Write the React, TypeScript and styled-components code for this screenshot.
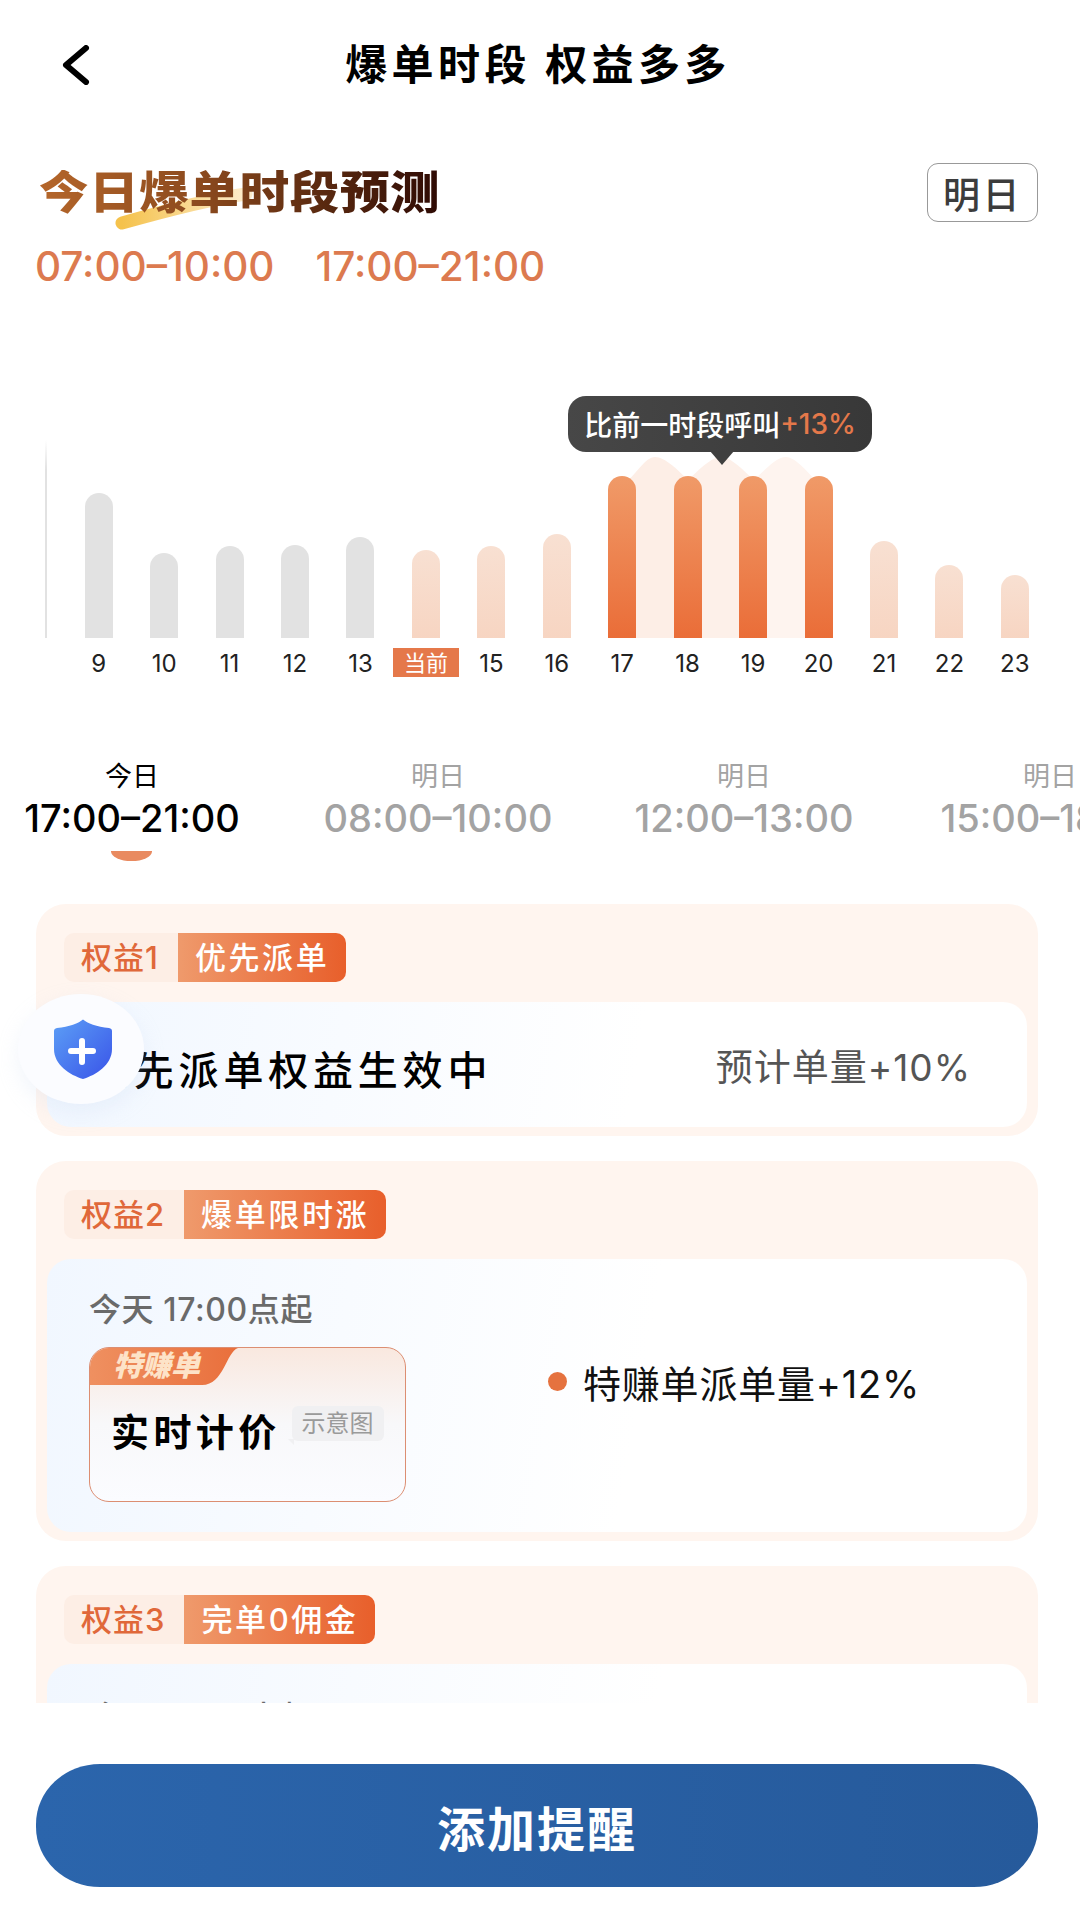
import React from "react";
import styled, { createGlobalStyle } from "styled-components";

const SANS = `Inter, "Noto Sans CJK SC", sans-serif`;

const GlobalStyle = createGlobalStyle`
	html,
	body {
		margin: 0;
		padding: 0;
		background: #fff;
		font-family: ${SANS};
	}
`;

const BARS = [
	{ label: "9", height: 145, kind: "past" },
	{ label: "10", height: 85, kind: "past" },
	{ label: "11", height: 92, kind: "past" },
	{ label: "12", height: 93, kind: "past" },
	{ label: "13", height: 101, kind: "past" },
	{ label: "当前", height: 88, kind: "soft" },
	{ label: "15", height: 92, kind: "soft" },
	{ label: "16", height: 104, kind: "soft" },
	{ label: "17", height: 162, kind: "hot" },
	{ label: "18", height: 162, kind: "hot" },
	{ label: "19", height: 162, kind: "hot" },
	{ label: "20", height: 162, kind: "hot" },
	{ label: "21", height: 97, kind: "soft" },
	{ label: "22", height: 73, kind: "soft" },
	{ label: "23", height: 63, kind: "soft" },
];

const SLOTS = [
	{ day: "今日", time: "17:00–21:00", active: true },
	{ day: "明日", time: "08:00–10:00", active: false },
	{ day: "明日", time: "12:00–13:00", active: false },
	{ day: "明日", time: "15:00–18:00", active: false },
];

function BackIcon() {
	return (
		<svg width="30" height="40" viewBox="0 0 30 40" fill="none">
			<path
				d="M25 3 L5 20 L25 37"
				stroke="#000"
				strokeWidth="6"
				strokeLinecap="round"
				strokeLinejoin="round"
			/>
		</svg>
	);
}

function ShieldIcon() {
	return (
		<svg width="58" height="60" viewBox="0 0 58 60">
			<defs>
				<linearGradient id="shield" x1="0" y1="0" x2="1" y2="1">
					<stop offset="0" stopColor="#5c9ff6" />
					<stop offset="1" stopColor="#3953e8" />
				</linearGradient>
			</defs>
			<path
				d="M29 0.5 C33 4 43 8 55 9 Q58 9.5 58 12 V30 C58 46 42 56 29 60 C16 56 0 46 0 30 V12 Q0 9.5 3 9 C15 8 25 4 29 0.5Z"
				fill="url(#shield)"
			/>
			<path
				d="M17 32 H39 M28 22 V43"
				stroke="#fff"
				strokeWidth="6"
				strokeLinecap="round"
			/>
		</svg>
	);
}

export default function App() {
	return (
		<Page>
			<GlobalStyle />
			<Header>
				<BackButton>
					<BackIcon />
				</BackButton>
				<Title>爆单时段 权益多多</Title>
			</Header>

			<Forecast>
				<ForecastRow>
					<Heading>
						<Swoosh width="140" height="48" viewBox="0 0 140 48" fill="none">
							<defs>
								<linearGradient id="swoosh" x1="0" y1="0" x2="1" y2="0">
									<stop offset="0" stopColor="#f5c24c" />
									<stop offset="1" stopColor="#fdeccb" />
								</linearGradient>
							</defs>
							<path
								d="M8 37 C40 28 90 14 132 8"
								stroke="url(#swoosh)"
								strokeWidth="13"
								strokeLinecap="round"
							/>
						</Swoosh>
						<HeadingText>今日爆单时段预测</HeadingText>
					</Heading>
					<DayButton>明日</DayButton>
				</ForecastRow>
				<Peaks>
					<span>07:00–10:00</span>
					<span>17:00–21:00</span>
				</Peaks>
			</Forecast>

			<Chart>
				<Humps width="1080" height="242" viewBox="0 0 1080 242">
					<path
						d="M622 242 V90 C637 78 645 61 655 61 C665 61 678 74 688 84 V242 Z"
						fill="#fdeee6"
					/>
					<path
						d="M688 242 V84 C699 74 711 61 721 61 C731 61 743 74 754 84 V242 Z"
						fill="#fdf0e9"
					/>
					<path
						d="M754 242 V84 C765 74 776 61 786 61 C796 61 809 78 819 88 V242 Z"
						fill="#fef4ef"
					/>
				</Humps>
				<Tooltip>
					比前一时段呼叫<em>+13%</em>
				</Tooltip>
				<Plot>
					<Axis />
					<Bars>
						{BARS.map((bar) => (
							<BarSlot key={bar.label}>
								<Bar $kind={bar.kind} style={{ height: bar.height }} />
							</BarSlot>
						))}
					</Bars>
				</Plot>
				<Labels>
					{BARS.map((bar) => (
						<BarLabel key={bar.label} $current={bar.label === "当前"}>
							{bar.label}
						</BarLabel>
					))}
				</Labels>
			</Chart>

			<Tabs>
				{SLOTS.map((slot) => (
					<Tab key={slot.time} $active={slot.active}>
						<TabDay>{slot.day}</TabDay>
						<TabTime>{slot.time}</TabTime>
						{slot.active && <TabMark />}
					</Tab>
				))}
			</Tabs>

			<Benefits>
				<Card>
					<Tag>
						<TagIndex>权益1</TagIndex>
						<TagName>优先派单</TagName>
					</Tag>
					<StatusPanel>
						<StatusText>优先派单权益生效中</StatusText>
						<StatusNote>预计单量+10%</StatusNote>
						<ShieldBadge>
							<ShieldIcon />
						</ShieldBadge>
					</StatusPanel>
				</Card>

				<Card>
					<Tag>
						<TagIndex>权益2</TagIndex>
						<TagName>爆单限时涨</TagName>
					</Tag>
					<DetailPanel>
						<DetailLeft>
							<StartTime>今天 17:00点起</StartTime>
							<MiniCard>
								<MiniBadge>特赚单</MiniBadge>
								<MiniBody>
									<MiniTitle>实时计价</MiniTitle>
									<Bubble>示意图</Bubble>
								</MiniBody>
							</MiniCard>
						</DetailLeft>
						<Bullet>
							<Dot />
							特赚单派单量+12%
						</Bullet>
					</DetailPanel>
				</Card>

				<Card>
					<Tag>
						<TagIndex>权益3</TagIndex>
						<TagName>完单0佣金</TagName>
					</Tag>
					<DetailPanel>
						<DetailLeft $top={35}>
							<StartTime>今天 17:00点起</StartTime>
						</DetailLeft>
					</DetailPanel>
				</Card>
			</Benefits>

			<Footer>
				<RemindButton>添加提醒</RemindButton>
			</Footer>
		</Page>
	);
}

const Page = styled.div`
	width: 1080px;
	height: 1920px;
	overflow: hidden;
	display: flex;
	flex-direction: column;
	background: #fff;
`;

const Header = styled.header`
	position: relative;
	height: 130px;
	flex: none;
	display: flex;
	align-items: center;
	justify-content: center;
`;

const BackButton = styled.div`
	position: absolute;
	left: 61px;
	top: 45px;
	line-height: 0;
`;

const Title = styled.h1`
	margin: 0 0 0 -4px;
	font-size: 42px;
	font-weight: 700;
	letter-spacing: 4.4px;
	line-height: 1;
	color: #000;
`;

const Forecast = styled.section`
	flex: none;
	height: 266px;
	padding: 33px 42px 0 36px;
	box-sizing: border-box;
`;

const ForecastRow = styled.div`
	display: flex;
	justify-content: space-between;
	align-items: center;
	height: 59px;
`;

const Heading = styled.div`
	position: relative;
	margin-left: 3px;
`;

const Swoosh = styled.svg`
	position: absolute;
	left: 75px;
	top: 16px;
`;

const HeadingText = styled.h2`
	position: relative;
	margin: 0;
	font-size: 45px;
	font-weight: 900;
	line-height: 1;
	letter-spacing: 0.6px;
	white-space: nowrap;
	color: transparent;
	background: linear-gradient(90deg, #b5662a 0%, #8c4a1e 40%, #5b2a10 70%, #2e0a04 100%);
	background-clip: text;
	-webkit-background-clip: text;
	transform: scaleX(1.1);
	transform-origin: left center;
`;

const DayButton = styled.div`
	width: 111px;
	height: 59px;
	box-sizing: border-box;
	border: 1.5px solid #999;
	border-radius: 11px;
	display: flex;
	align-items: center;
	justify-content: center;
	font-size: 37px;
	font-weight: 500;
	letter-spacing: 2.5px;
	color: #3c3c3c;
`;

const Peaks = styled.div`
	display: flex;
	gap: 41px;
	margin-top: 22px;
	margin-left: -1px;
	font-size: 40.5px;
	font-weight: 500;
	line-height: 46px;
	color: #dc7a4f;
`;

const Chart = styled.section`
	position: relative;
	flex: none;
	height: 364px;
`;

const Humps = styled.svg`
	position: absolute;
	left: 0;
	top: 0;
`;

const Tooltip = styled.div`
	position: absolute;
	left: 568px;
	top: 0;
	width: 304px;
	height: 56px;
	box-sizing: border-box;
	border-radius: 18px;
	background: linear-gradient(90deg, #474747, #383838);
	color: #fff;
	display: flex;
	align-items: center;
	justify-content: center;
	font-size: 28px;
	font-weight: 500;
	white-space: nowrap;
	z-index: 2;

	em {
		font-style: normal;
		color: #e4784a;
	}

	&::after {
		content: "";
		position: absolute;
		left: 142px;
		bottom: -13px;
		border-left: 12px solid transparent;
		border-right: 12px solid transparent;
		border-top: 14px solid #3f3f3f;
	}
`;

const Plot = styled.div`
	position: relative;
	display: flex;
	align-items: flex-end;
	height: 198px;
	padding: 44px 0 0 45px;
`;

const Axis = styled.div`
	width: 2px;
	height: 100%;
	background: linear-gradient(180deg, #fff, #e2e2e2 15%);
`;

const Bars = styled.div`
	display: flex;
	align-items: flex-end;
	margin-left: 19px;
`;

const BarSlot = styled.div`
	width: 65.45px;
	display: flex;
	justify-content: center;
`;

const BAR_FILL: Record<string, string> = {
	past: "#e2e2e2",
	soft: "linear-gradient(180deg, #f8e0d2, #f7d5c2)",
	hot: "linear-gradient(180deg, #f09a68, #ea6d38)",
};

const Bar = styled.div<{ $kind: string }>`
	width: 28px;
	border-radius: 14px 14px 0 0;
	background: ${(p) => BAR_FILL[p.$kind]};
`;

const Labels = styled.div`
	display: flex;
	padding-left: 66px;
	margin-top: 10px;
`;

const BarLabel = styled.div<{ $current: boolean }>`
	flex: none;
	box-sizing: border-box;
	width: 65.45px;
	height: 29px;
	line-height: 31px;
	text-align: center;
	font-size: ${(p) => (p.$current ? "22px" : "24px")};
	color: ${(p) => (p.$current ? "#fff" : "#222")};
	background: ${(p) => (p.$current ? "#e5784a" : "transparent")};
`;

const Tabs = styled.section`
	flex: none;
	height: 144px;
	display: flex;
	padding-left: 18px;
	overflow: hidden;
`;

const Tab = styled.div<{ $active: boolean }>`
	position: relative;
	flex: none;
	width: 306px;
	box-sizing: border-box;
	padding-right: 78px;
	text-align: center;
	color: ${(p) => (p.$active ? "#000" : "#a3a3a3")};
`;

const TabDay = styled.div`
	font-size: 27px;
	line-height: 34px;
`;

const TabTime = styled.div`
	margin-top: 4px;
	margin-left: -10px;
	margin-right: -10px;
	font-size: 38px;
	font-weight: 500;
	line-height: 40px;
	white-space: nowrap;
`;

const TabMark = styled.div`
	position: absolute;
	left: 93px;
	top: 91px;
	width: 41px;
	height: 10px;
	border-radius: 0 0 21px 21px / 0 0 10px 10px;
	background: #e98a60;
`;

const Benefits = styled.section`
	flex: 1;
	min-height: 0;
	overflow: hidden;
	display: flex;
	flex-direction: column;
	gap: 25px;
	padding: 0 42px 0 36px;
`;

const Card = styled.article`
	flex: none;
	border-radius: 30px;
	background: #fff5ef;
	padding: 29px 11px 9px;
`;

const Tag = styled.div`
	display: flex;
	height: 49px;
	margin-left: 17px;
`;

const TagIndex = styled.div`
	padding: 0 19px 4px 17px;
	display: flex;
	align-items: center;
	border-radius: 10px 0 0 10px;
	background: #fdeee5;
	color: #e0683a;
	font-size: 31px;
	font-weight: 500;
	letter-spacing: 1px;
`;

const TagName = styled.div`
	padding: 0 17px 4px 17px;
	display: flex;
	align-items: center;
	border-radius: 0 10px 10px 0;
	background: linear-gradient(90deg, #ef9a6c, #e85f2b);
	color: #fff;
	font-size: 31px;
	font-weight: 500;
	letter-spacing: 2.6px;
`;

const StatusPanel = styled.div`
	position: relative;
	margin-top: 20px;
	height: 125px;
	border-radius: 24px;
	background: linear-gradient(100deg, #f1f7ff, #fff 60%);
	display: flex;
	align-items: center;
	justify-content: space-between;
	padding: 0 56px 0 42px;
`;

const StatusText = styled.div`
	font-size: 40px;
	font-weight: 500;
	letter-spacing: 4.8px;
	margin-top: 6px;
	color: #000;
`;

const StatusNote = styled.div`
	font-size: 37px;
	letter-spacing: 1px;
	color: #555;
`;

const ShieldBadge = styled.div`
	position: absolute;
	left: -29px;
	top: -8px;
	width: 126px;
	height: 110px;
	border-radius: 50%;
	background: #fbfcff;
	box-shadow: 0 8px 20px rgba(200, 215, 240, 0.25);
	display: flex;
	align-items: center;
	justify-content: center;
	padding-left: 3px;
	box-sizing: border-box;
`;

const DetailPanel = styled.div`
	margin-top: 20px;
	height: 273px;
	border-radius: 24px;
	background: linear-gradient(100deg, #f1f7ff, #fff 60%);
	display: flex;
	align-items: center;
	padding: 0 42px;
	gap: 142px;
`;

const DetailLeft = styled.div<{ $top?: number }>`
	align-self: flex-start;
	padding-top: ${(p) => p.$top ?? 32}px;
`;

const StartTime = styled.div`
	font-size: 32px;
	font-weight: 500;
	line-height: 38px;
	letter-spacing: 0.6px;
	white-space: nowrap;
	color: #6a6a6a;
`;

const MiniCard = styled.div`
	margin-top: 18px;
	width: 317px;
	height: 155px;
	box-sizing: border-box;
	border: 1px solid #dc8e72;
	border-radius: 20px;
	overflow: hidden;
	background: linear-gradient(180deg, #f9e8df 0%, #f8f8fa 50%, #fbfcff 100%);
`;

const MiniBadge = styled.div`
	width: 148px;
	height: 37px;
	padding-left: 23px;
	box-sizing: border-box;
	clip-path: path("M0 37 V0 H148 C136 4 134 37 112 37 Z");
	background: linear-gradient(90deg, #ef9060, #e96f3c);
	color: #fde3c8;
	font-size: 29px;
	font-weight: 900;
	font-style: italic;
	line-height: 35px;
	white-space: nowrap;
`;

const MiniBody = styled.div`
	display: flex;
	align-items: center;
	padding: 17px 0 0 21px;
`;

const MiniTitle = styled.div`
	font-size: 38px;
	font-weight: 700;
	letter-spacing: 4.4px;
	white-space: nowrap;
	color: #000;
`;

const Bubble = styled.div`
	position: relative;
	width: 92px;
	height: 35px;
	margin: -12px 0 0 11px;
	border-radius: 6px;
	background: #f0f0f2;
	color: #9a9a9a;
	font-size: 24px;
	line-height: 35px;
	text-align: center;

	&::after {
		content: "";
		position: absolute;
		left: -4px;
		bottom: -4px;
		border-left: 6px solid transparent;
		border-top: 6px solid #f0f0f2;
	}
`;

const Bullet = styled.div`
	display: flex;
	align-items: center;
	gap: 16px;
	font-size: 38px;
	letter-spacing: 0.8px;
	white-space: nowrap;
	color: #111;
	margin-top: -28px;
`;

const Dot = styled.span`
	width: 19px;
	height: 19px;
	border-radius: 50%;
	background: #e5723f;
`;

const Footer = styled.footer`
	flex: none;
	height: 217px;
	padding: 61px 42px 0 36px;
	box-sizing: border-box;
	background: #fff;
`;

const RemindButton = styled.div`
	height: 123px;
	border-radius: 64px / 60px;
	background: linear-gradient(90deg, #2b65ac, #265a9b);
	color: #fff;
	font-size: 48px;
	font-weight: 700;
	letter-spacing: 2px;
	display: flex;
	align-items: center;
	justify-content: center;
`;
